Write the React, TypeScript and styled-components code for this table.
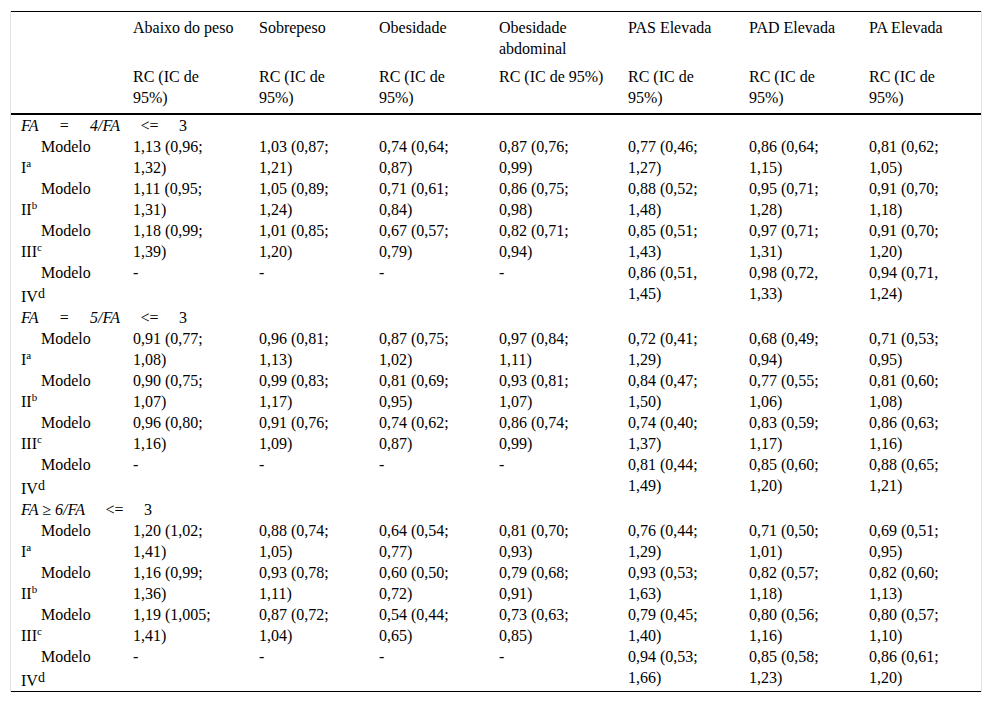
import styled, { createGlobalStyle } from 'styled-components'

const GlobalStyle = createGlobalStyle`
  body {
    margin: 0;
    background: #fff;
    font-family: "Liberation Serif", "Times New Roman", serif;
    color: #000;
  }
`

const Wrapper = styled.div`
  margin: 11px 0 0 10px;
  width: 970px;
  border-left: 1px solid #e2e2e2;
  border-right: 1px solid #e2e2e2;
`

const Table = styled.table`
  width: 970px;
  table-layout: fixed;
  border-collapse: collapse;
  font-family: "Liberation Serif", "Times New Roman", serif;
  font-size: 16px;
  line-height: 21px;
  color: #000;
  border-top: 1px solid #000;
  border-bottom: 1px solid #000;
`

const Head = styled.thead`
  border-bottom: 2px solid #000;
`

const Th = styled.th<{ $top?: boolean }>`
  font-weight: normal;
  text-align: left;
  vertical-align: top;
  padding: ${p => (p.$top ? '5px 13px 3px 10px' : '4px 13px 5px 10px')};
`

const Td = styled.td`
  text-align: left;
  vertical-align: top;
  padding: 0 13px 0 10px;
`

const GroupCell = styled.td`
  padding: 0 10px;
  white-space: nowrap;
  word-spacing: 16.5px;

  i {
    font-style: italic;
  }
`

const Tight = styled.i`
  word-spacing: normal;
`

const Label = styled.span`
  display: block;
  text-indent: 20px;
`

const Sup = styled.sup<{ $big?: boolean }>`
  font-size: ${p => (p.$big ? '14px' : '11px')};
  vertical-align: ${p => (p.$big ? '4px' : '6px')};
  line-height: ${p => (p.$big ? '21px' : '0')};
`

const widths = [112, 126, 120, 120, 129, 121, 120, 122]

const headers = [
  'Abaixo do peso',
  'Sobrepeso',
  'Obesidade',
  'Obesidade abdominal',
  'PAS Elevada',
  'PAD Elevada',
  'PA Elevada',
]

type Row = { roman: string; sup: string; values: string[] }
type Group = { key: string; label: React.ReactNode; rows: Row[] }

const groups: Group[] = [
  {
    key: 'g4',
    label: (
      <>
        <i>FA = 4/FA</i> {'<='} 3
      </>
    ),
    rows: [
      { roman: 'I', sup: 'a', values: ['1,13 (0,96; 1,32)', '1,03 (0,87; 1,21)', '0,74 (0,64; 0,87)', '0,87 (0,76; 0,99)', '0,77 (0,46; 1,27)', '0,86 (0,64; 1,15)', '0,81 (0,62; 1,05)'] },
      { roman: 'II', sup: 'b', values: ['1,11 (0,95; 1,31)', '1,05 (0,89; 1,24)', '0,71 (0,61; 0,84)', '0,86 (0,75; 0,98)', '0,88 (0,52; 1,48)', '0,95 (0,71; 1,28)', '0,91 (0,70; 1,18)'] },
      { roman: 'III', sup: 'c', values: ['1,18 (0,99; 1,39)', '1,01 (0,85; 1,20)', '0,67 (0,57; 0,79)', '0,82 (0,71; 0,94)', '0,85 (0,51; 1,43)', '0,97 (0,71; 1,31)', '0,91 (0,70; 1,20)'] },
      { roman: 'IV', sup: 'd', values: ['-', '-', '-', '-', '0,86 (0,51, 1,45)', '0,98 (0,72, 1,33)', '0,94 (0,71, 1,24)'] },
    ],
  },
  {
    key: 'g5',
    label: (
      <>
        <i>FA = 5/FA</i> {'<='} 3
      </>
    ),
    rows: [
      { roman: 'I', sup: 'a', values: ['0,91 (0,77; 1,08)', '0,96 (0,81; 1,13)', '0,87 (0,75; 1,02)', '0,97 (0,84; 1,11)', '0,72 (0,41; 1,29)', '0,68 (0,49; 0,94)', '0,71 (0,53; 0,95)'] },
      { roman: 'II', sup: 'b', values: ['0,90 (0,75; 1,07)', '0,99 (0,83; 1,17)', '0,81 (0,69; 0,95)', '0,93 (0,81; 1,07)', '0,84 (0,47; 1,50)', '0,77 (0,55; 1,06)', '0,81 (0,60; 1,08)'] },
      { roman: 'III', sup: 'c', values: ['0,96 (0,80; 1,16)', '0,91 (0,76; 1,09)', '0,74 (0,62; 0,87)', '0,86 (0,74; 0,99)', '0,74 (0,40; 1,37)', '0,83 (0,59; 1,17)', '0,86 (0,63; 1,16)'] },
      { roman: 'IV', sup: 'd', values: ['-', '-', '-', '-', '0,81 (0,44; 1,49)', '0,85 (0,60; 1,20)', '0,88 (0,65; 1,21)'] },
    ],
  },
  {
    key: 'g6',
    label: (
      <>
        <Tight>FA ≥ 6/FA</Tight> {'<='} 3
      </>
    ),
    rows: [
      { roman: 'I', sup: 'a', values: ['1,20 (1,02; 1,41)', '0,88 (0,74; 1,05)', '0,64 (0,54; 0,77)', '0,81 (0,70; 0,93)', '0,76 (0,44; 1,29)', '0,71 (0,50; 1,01)', '0,69 (0,51; 0,95)'] },
      { roman: 'II', sup: 'b', values: ['1,16 (0,99; 1,36)', '0,93 (0,78; 1,11)', '0,60 (0,50; 0,72)', '0,79 (0,68; 0,91)', '0,93 (0,53; 1,63)', '0,82 (0,57; 1,18)', '0,82 (0,60; 1,13)'] },
      { roman: 'III', sup: 'c', values: ['1,19 (1,005; 1,41)', '0,87 (0,72; 1,04)', '0,54 (0,44; 0,65)', '0,73 (0,63; 0,85)', '0,79 (0,45; 1,40)', '0,80 (0,56; 1,16)', '0,80 (0,57; 1,10)'] },
      { roman: 'IV', sup: 'd', values: ['-', '-', '-', '-', '0,94 (0,53; 1,66)', '0,85 (0,58; 1,23)', '0,86 (0,61; 1,20)'] },
    ],
  },
]

function App() {
  return (
    <>
      <GlobalStyle />
      <Wrapper>
        <Table>
          <colgroup>
            {widths.map((w, i) => (
              <col key={i} style={{ width: w }} />
            ))}
          </colgroup>
          <Head>
            <tr>
              <Th $top />
              {headers.map(h => (
                <Th $top key={h}>{h}</Th>
              ))}
            </tr>
            <tr>
              <Th />
              {headers.map(h => (
                <Th key={h}>RC (IC de 95%)</Th>
              ))}
            </tr>
          </Head>
          <tbody>
            {groups.map(g => (
              <>
                <tr key={g.key}>
                  <GroupCell colSpan={8}>{g.label}</GroupCell>
                </tr>
                {g.rows.map(r => (
                  <tr key={g.key + r.roman}>
                    <Td>
                      <Label>Modelo</Label>
                      {r.roman}
                      <Sup $big={r.sup === 'd'}>{r.sup}</Sup>
                    </Td>
                    {r.values.map((v, i) => (
                      <Td key={i}>{v}</Td>
                    ))}
                  </tr>
                ))}
              </>
            ))}
          </tbody>
        </Table>
      </Wrapper>
    </>
  )
}

export default App
